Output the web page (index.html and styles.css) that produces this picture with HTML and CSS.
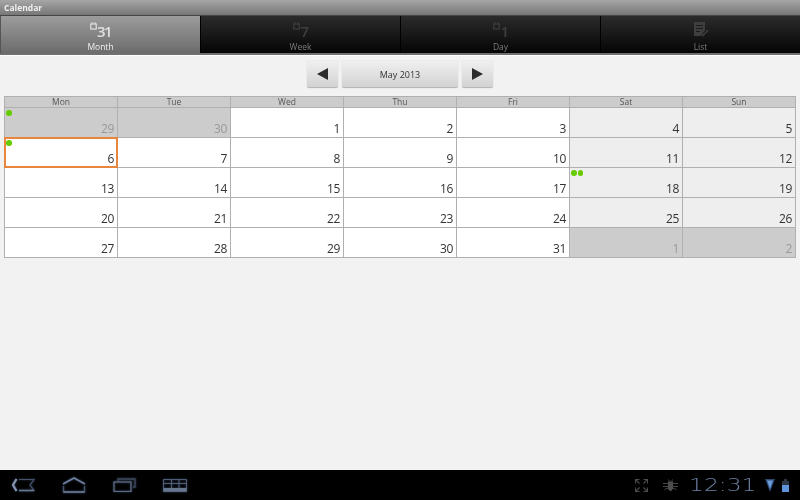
FILE: index.html
```html
<!DOCTYPE html>
<html lang="en">
<head>
    <meta charset="UTF-8">
    <title>Calendar</title>
    <link rel="stylesheet" href="styles.css">
</head>
<body>
    <div class="app">
        <div class="titlebar">Calendar</div>
        <div class="tabs">
            <div class="tab active">
                <div class="tab-icon">
                    <svg class="tab-cal" width="7" height="8" viewBox="0 0 7 8"><path d="M2 0V2M5 0V2" stroke="currentColor"/><rect x="0.75" y="2" width="5.5" height="5" fill="none" stroke="currentColor" stroke-width="1.2"/></svg>
                    <span class="tab-num">31</span>
                </div>
                <div class="tab-label">Month</div>
            </div>
            <div class="tab">
                <div class="tab-icon">
                    <svg class="tab-cal" width="7" height="8" viewBox="0 0 7 8"><path d="M2 0V2M5 0V2" stroke="currentColor"/><rect x="0.75" y="2" width="5.5" height="5" fill="none" stroke="currentColor" stroke-width="1.2"/></svg>
                    <span class="tab-num">7</span>
                </div>
                <div class="tab-label">Week</div>
            </div>
            <div class="tab">
                <div class="tab-icon">
                    <svg class="tab-cal" width="7" height="8" viewBox="0 0 7 8"><path d="M2 0V2M5 0V2" stroke="currentColor"/><rect x="0.75" y="2" width="5.5" height="5" fill="none" stroke="currentColor" stroke-width="1.2"/></svg>
                    <span class="tab-num">1</span>
                </div>
                <div class="tab-label">Day</div>
            </div>
            <div class="tab">
                <div class="tab-icon">
                    <svg width="16" height="16" viewBox="0 0 16 16"><path d="M1 0H12V8.5L7.5 14H1Z" fill="currentColor"/><path d="M3 3.5H10M3 6.5H10M3 9.5H7" stroke="#1c1c1c"/><path d="M7.5 10.5L10 13.5L15 8" fill="none" stroke="currentColor" stroke-width="1.6"/></svg>
                </div>
                <div class="tab-label">List</div>
            </div>
        </div>

        <div class="content">
            <div class="month-nav">
                <div class="nav-btn arrow"><svg width="11" height="12" viewBox="0 0 11 12"><path d="M11 0V12L0 6Z" fill="#2b2b2b"/></svg></div>
                <div class="nav-btn month">May 2013</div>
                <div class="nav-btn arrow"><svg width="11" height="12" viewBox="0 0 11 12"><path d="M0 0V12L11 6Z" fill="#2b2b2b"/></svg></div>
            </div>

            <div class="calendar">
                <div class="day-name">Mon</div>
                <div class="day-name">Tue</div>
                <div class="day-name">Wed</div>
                <div class="day-name">Thu</div>
                <div class="day-name">Fri</div>
                <div class="day-name">Sat</div>
                <div class="day-name">Sun</div>

                <div class="cell other"><div class="dots"><i></i></div><span>29</span></div>
                <div class="cell other"><span>30</span></div>
                <div class="cell"><span>1</span></div>
                <div class="cell"><span>2</span></div>
                <div class="cell"><span>3</span></div>
                <div class="cell weekend"><span>4</span></div>
                <div class="cell weekend"><span>5</span></div>

                <div class="cell selected"><div class="dots"><i></i></div><span>6</span></div>
                <div class="cell"><span>7</span></div>
                <div class="cell"><span>8</span></div>
                <div class="cell"><span>9</span></div>
                <div class="cell"><span>10</span></div>
                <div class="cell weekend"><span>11</span></div>
                <div class="cell weekend"><span>12</span></div>

                <div class="cell"><span>13</span></div>
                <div class="cell"><span>14</span></div>
                <div class="cell"><span>15</span></div>
                <div class="cell"><span>16</span></div>
                <div class="cell"><span>17</span></div>
                <div class="cell weekend"><div class="dots"><i></i><i></i></div><span>18</span></div>
                <div class="cell weekend"><span>19</span></div>

                <div class="cell"><span>20</span></div>
                <div class="cell"><span>21</span></div>
                <div class="cell"><span>22</span></div>
                <div class="cell"><span>23</span></div>
                <div class="cell"><span>24</span></div>
                <div class="cell weekend"><span>25</span></div>
                <div class="cell weekend"><span>26</span></div>

                <div class="cell"><span>27</span></div>
                <div class="cell"><span>28</span></div>
                <div class="cell"><span>29</span></div>
                <div class="cell"><span>30</span></div>
                <div class="cell"><span>31</span></div>
                <div class="cell other"><span>1</span></div>
                <div class="cell other"><span>2</span></div>
            </div>
        </div>

        <div class="systembar">
            <div class="sys-nav">
                <svg width="23" height="14" viewBox="0 0 23 14"><path d="M4.5 1L1 7L4.5 13" fill="none" stroke="#8294b0" stroke-width="2.2"/><path d="M7 1.5H22L18 7L22 12.5H7" fill="none" stroke="#46536a" stroke-width="1.2"/><path d="M7 12.5H22" stroke="#66768e" stroke-width="1.6"/></svg>
                <svg width="24" height="16" viewBox="0 0 24 16"><path d="M1 7L12 1L23 7" fill="none" stroke="#6f80a0" stroke-width="1.6"/><path d="M1.5 9V15H22.5V9" fill="none" stroke="#46536a" stroke-width="1.3"/><path d="M1.5 15H22.5" stroke="#66768e" stroke-width="1.6"/></svg>
                <svg width="23" height="14" viewBox="0 0 23 14"><path d="M5 3V1H22V9H20" fill="none" stroke="#3d485c" stroke-width="1.4"/><rect x="1" y="4" width="17" height="9.5" fill="none" stroke="#5c6b84" stroke-width="1.3"/></svg>
                <svg width="24" height="13" viewBox="0 0 24 13"><path d="M0.5 0.5H23.5V12.5H0.5ZM0.5 4.5H23.5M8.5 0.5V9M16 0.5V9" fill="none" stroke="#4f5d75" stroke-width="1"/><path d="M0.5 9H23.5V12.5H0.5Z" fill="#66768e"/></svg>
            </div>
            <div class="sys-status">
                <svg class="fullscreen" width="13" height="13" viewBox="0 0 13 13"><path d="M4.5 0.5H0.5V4.5M0.5 0.5L4.5 4.5M8.5 0.5H12.5V4.5M12.5 0.5L8.5 4.5M0.5 8.5V12.5H4.5M0.5 12.5L4.5 8.5M12.5 8.5V12.5H8.5M12.5 12.5L8.5 8.5" fill="none" stroke="#4c4c4c" stroke-width="1.1"/></svg>
                <svg class="bug" width="15" height="13" viewBox="0 0 15 13"><path d="M5 2.5H10V10L7.5 12.5L5 10Z" fill="#505050"/><path d="M5.5 0.5L6.5 2.5M9.5 0.5L8.5 2.5M0 4.5H15M0 7.5H15M1.5 10.5L5 9M13.5 10.5L10 9" stroke="#484848" stroke-width="1"/></svg>
                <span class="clock">12:31</span>
                <svg class="signal" width="10" height="13" viewBox="0 0 10 13"><path d="M0 0H10L5 13Z" fill="#2e4a74"/><path d="M2 1.5H8L5 10Z" fill="#6d9ad8"/></svg>
                <svg width="7" height="13" viewBox="0 0 7 13"><path d="M2 0H5V2H7V13H0V2H2Z" fill="#2c3644"/><rect y="6" width="7" height="7" fill="#5f93dc"/></svg>
            </div>
        </div>
    </div>
</body>
</html>
```

FILE: styles.css
```css
html, body {
    margin: 0;
    padding: 0;
    background: #000;
}
body {
    font-family: "Open Sans", "Liberation Sans", sans-serif;
}
.app {
    width: 800px;
    height: 500px;
    display: flex;
    flex-direction: column;
    overflow: hidden;
    opacity: 0.999;
}
.titlebar {
    height: 15px;
    line-height: 15px;
    padding-left: 4px;
    font-size: 8.5px;
    font-weight: 700;
    color: #f0f0f0;
    background: linear-gradient(#a6a6a6, #777);
}
.tabs {
    height: 40px;
    display: flex;
    box-sizing: border-box;
    border-top: 1px solid #444;
    border-bottom: 2px solid #707070;
    background: #111;
}
.tab {
    flex: 1;
    display: flex;
    flex-direction: column;
    align-items: center;
    color: #3e3e3e;
    background: linear-gradient(#2b2b2b, #050505);
    border-left: 1px solid #000;
}
.tab.active {
    color: #e0e0e0;
    background: linear-gradient(#9c9c9c, #6c6c6c);
    border-left: 1px solid #555;
}
.tab-icon {
    height: 25px;
    padding-top: 6px;
    box-sizing: border-box;
    display: flex;
    align-items: flex-start;
}
.tab-num {
    font-size: 15px;
    line-height: 13px;
    font-weight: 600;
    letter-spacing: -1.5px;
    margin-top: 2.5px;
}
.tab-label {
    font-size: 8.5px;
    line-height: 12px;
    color: #7c7c7c;
}
.tab.active .tab-label {
    color: #f0f0f0;
}
.content {
    flex: 1;
    background: #f2f2f2;
    border-top: 1px solid #fff;
    padding: 5px 4px 0;
}
.month-nav {
    display: flex;
    justify-content: center;
    gap: 4px;
    margin-bottom: 8px;
}
.nav-btn {
    height: 27px;
    box-sizing: border-box;
    display: flex;
    align-items: center;
    justify-content: center;
    background: linear-gradient(#f0f0f0, #d2d2d2);
    border-radius: 2px;
    border-bottom: 1px solid #b8b8b8;
    box-shadow: 0 0 1px #aaa;
}
.nav-btn.arrow {
    width: 31px;
}
.nav-btn.month {
    width: 116px;
    font-size: 9px;
    color: #333;
}
.calendar {
    display: grid;
    grid-template-columns: repeat(7, 112px);
    grid-template-rows: 10px repeat(5, 29px);
    gap: 1px;
    width: 792px;
    box-sizing: border-box;
    padding: 1px;
    background: #b0b0b0;
}
.day-name {
    background: #ccc;
    font-size: 8.5px;
    line-height: 10px;
    text-align: center;
    color: #555;
}
.cell {
    position: relative;
    background: #fff;
    display: flex;
    align-items: flex-end;
    justify-content: flex-end;
    padding: 0 3px 1px 0;
    font-size: 12px;
    line-height: 15px;
    letter-spacing: -0.3px;
    color: #333;
}
.cell.weekend {
    background: #eee;
}
.cell.other {
    background: #ccc;
    color: #999;
}
.cell.selected {
    outline: 2px solid #e8863e;
    outline-offset: -1px;
    z-index: 1;
}
.dots {
    position: absolute;
    left: 1px;
    top: 2px;
    display: flex;
    gap: 1px;
}
.dots i {
    width: 5.5px;
    height: 5.5px;
    border-radius: 50%;
    background: #66cc00;
}
.systembar {
    height: 30px;
    background: #000;
    display: flex;
    justify-content: space-between;
    align-items: center;
}
.sys-nav {
    display: flex;
    align-items: center;
    gap: 27px;
    padding-left: 12px;
}
.sys-nav svg {
    filter: drop-shadow(0 0 1px #33415a);
}
.sys-status {
    display: flex;
    align-items: center;
    padding-right: 11px;
}
.fullscreen {
    margin-right: 15px;
}
.bug {
    margin-right: 11px;
}
.clock {
    font-family: "DejaVu Sans", sans-serif;
    font-size: 18px;
    font-weight: 200;
    line-height: 20px;
    width: 68px;
    margin-right: 8px;
    transform: scaleX(1.3);
    transform-origin: left;
    color: #6f84a8;
}
.signal {
    margin-right: 7px;
}
```
